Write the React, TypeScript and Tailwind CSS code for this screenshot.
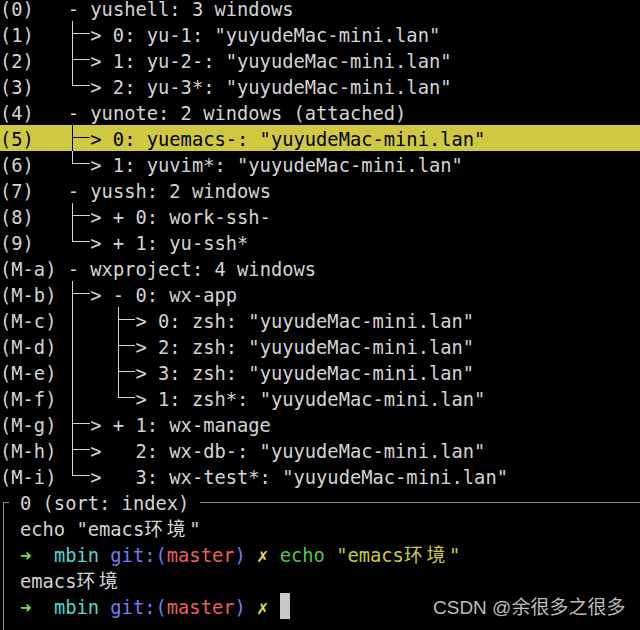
import React from "react";

const HOST = '"yuyudeMac-mini.lan"';

const tree: [string, string][] = [
  ["(0)", "- yushell: 3 windows"],
  ["(1)", `├─> 0: yu-1: ${HOST}`],
  ["(2)", `├─> 1: yu-2-: ${HOST}`],
  ["(3)", `└─> 2: yu-3*: ${HOST}`],
  ["(4)", "- yunote: 2 windows (attached)"],
  ["(5)", `├─> 0: yuemacs-: ${HOST}`],
  ["(6)", `└─> 1: yuvim*: ${HOST}`],
  ["(7)", "- yussh: 2 windows"],
  ["(8)", "├─> + 0: work-ssh-"],
  ["(9)", "└─> + 1: yu-ssh*"],
  ["(M-a)", "- wxproject: 4 windows"],
  ["(M-b)", "├─> - 0: wx-app"],
  ["(M-c)", `│   ├─> 0: zsh: ${HOST}`],
  ["(M-d)", `│   ├─> 2: zsh: ${HOST}`],
  ["(M-e)", `│   ├─> 3: zsh: ${HOST}`],
  ["(M-f)", `│   └─> 1: zsh*: ${HOST}`],
  ["(M-g)", "├─> + 1: wx-manage"],
  ["(M-h)", `├─>   2: wx-db-: ${HOST}`],
  ["(M-i)", `└─>   3: wx-test*: ${HOST}`],
];

// text sits ~2px lower in the row than a centred line box would put it
const TX = "pt-[4px]";

// box-drawing cell, 1ch wide, drawn with borders so lines join across rows
const BoxCell = ({ ch }: { ch: string }) => {
  const tl = ch === "─" ? "border-b" : "border-r";
  const tr = ch === "│" ? "" : "border-b";
  const bl = ch === "├" || ch === "│" ? "border-r" : "";
  return (
    <span className="grid w-[1ch] shrink-0 self-stretch grid-cols-2 grid-rows-2">
      <span className={tl} />
      <span className={tr} />
      <span className={bl} />
      <span />
    </span>
  );
};

const Wide = ({ children }: { children: string }) => (
  <span className="inline-block w-[2ch] shrink-0 pt-[4px]">{children}</span>
);

// split a terminal line into text runs, box cells and double-width CJK cells
const Term = ({ text }: { text: string }) => {
  const out: React.ReactNode[] = [];
  let run = "";
  const flush = () => {
    if (run)
      out.push(
        <span key={out.length} className={TX}>
          {run}
        </span>
      );
    run = "";
  };
  for (const ch of text) {
    if ("│├└─".includes(ch)) {
      flush();
      out.push(<BoxCell key={out.length} ch={ch} />);
    } else if (/[\u4e00-\u9fff]/.test(ch)) {
      flush();
      out.push(<Wide key={out.length}>{ch}</Wide>);
    } else run += ch;
  }
  flush();
  return <>{out}</>;
};

const Prompt = ({ children }: { children?: React.ReactNode }) => (
  <div className="flex h-[26px] items-center whitespace-pre">
    <span className={"font-bold text-[#7ee04c] " + TX}>➜</span>
    <span className={TX}>{"  "}</span>
    <span className={"text-[#4fd6d6] " + TX}>mbin</span>
    <span className={TX}> </span>
    <span className={"text-[#6f7ff2] " + TX}>git:(</span>
    <span className={"text-[#e8605a] " + TX}>master</span>
    <span className={"text-[#6f7ff2] " + TX}>)</span>
    <span className={TX}> </span>
    <span className={"text-[#e2e04a] " + TX}>✗</span>
    <span className={TX}> </span>
    {children}
  </div>
);

export default function App() {
  return (
    <div
      className="relative flex h-[630px] w-[640px] flex-col overflow-hidden bg-black text-[18.75px] text-[#d4d4d4]"
      style={{ fontFamily: '"DejaVu Sans Mono", "Noto Sans CJK SC", monospace' }}
    >
      <div className="-mt-[5px]">
        {tree.map(([key, body], i) => (
          <div
            key={key}
            className={
              "flex h-[26px] items-center whitespace-pre " +
              (i === 5 ? "bg-[#d0c840] text-black" : "")
            }
          >
            <span className={TX}>{key.padEnd(6)}</span>
            <Term text={body} />
          </div>
        ))}
      </div>

      <div className="flex h-[26px] items-center whitespace-pre pl-[3px]">
        <span className="grid w-[6px] self-stretch grid-rows-2">
          <span />
          <span className="border-l border-t border-[#8a8a8a]" />
        </span>
        <span className={"px-[11px] " + TX}>0 (sort: index)</span>
        <span className="flex-1 border-t border-[#8a8a8a]" />
      </div>
      <div className="ml-[3px] flex-1 border-l border-[#8a8a8a] pl-[16px]">
        <div className="flex h-[26px] items-center whitespace-pre">
          <Term text={'echo "emacs环境"'} />
        </div>
        <Prompt>
          <span className={"text-[#4ec84e] " + TX}>echo</span>
          <span className={TX}> </span>
          <span className="flex self-stretch items-center text-[#cdcb3c]">
            <Term text={'"emacs环境"'} />
          </span>
        </Prompt>
        <div className="flex h-[26px] items-center whitespace-pre">
          <Term text="emacs环境" />
        </div>
        <Prompt>
          <span className="h-[26px] w-[10px] bg-[#c8c8c8]" />
        </Prompt>
      </div>

      <div
        className="absolute left-[433px] top-[595px] text-[19px] leading-[26px] text-[#bdbdbd]"
        style={{ fontFamily: '"Liberation Sans", "Noto Sans CJK SC", sans-serif' }}
      >
        CSDN @余很多之很多
      </div>
    </div>
  );
}
